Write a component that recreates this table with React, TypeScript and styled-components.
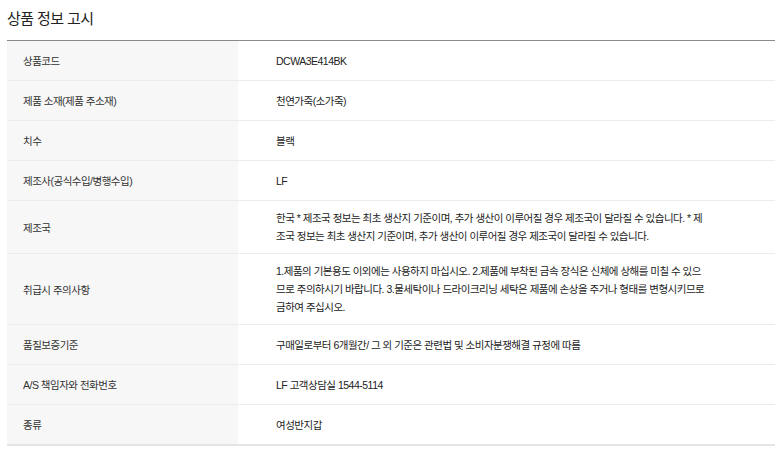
import React from "react";
import styled, { createGlobalStyle } from "styled-components";

const Global = createGlobalStyle`
  html, body { margin: 0; padding: 0; background: #fff; }
  body {
    font-family: "Liberation Sans", "Noto Sans CJK KR", sans-serif;
    color: #222;
  }
`;

const Page = styled.div`
  padding: 0 5px 0 7px;
`;

const Title = styled.h2`
  margin: 0;
  height: 40px;
  display: flex;
  align-items: center;
  padding-bottom: 5px;
  box-sizing: border-box;
  font-size: 15px;
  font-weight: 400;
  letter-spacing: -0.6px;
  color: #222;
`;

const Table = styled.div`
  border-top: 1px solid #8a8a8a;
`;

const Row = styled.div`
  display: grid;
  grid-template-columns: 231px 1fr;
  border-bottom: 1px solid #ececec;
  &:last-child { border-bottom: 2px solid #e4e4e4; }
`;

const Label = styled.div`
  background: #f7f7f7;
  display: flex;
  align-items: center;
  padding: 0 0 0 16px;
  font-size: 10.5px;
  letter-spacing: -0.5px;
  color: #333;
`;

const Value = styled.div`
  min-height: 39px;
  box-sizing: border-box;
  display: flex;
  align-items: center;
  padding: 8px 40px 8px 38px;
  font-size: 10.5px;
  line-height: 18px;
  letter-spacing: -0.5px;
  color: #222;
`;

const Lines = styled.span`
  display: block;
`;

const rows: [string, string[]][] = [
  ["상품코드", ["DCWA3E414BK"]],
  ["제품 소재(제품 주소재)", ["천연가죽(소가죽)"]],
  ["치수", ["블랙"]],
  ["제조사(공식수입/병행수입)", ["LF"]],
  [
    "제조국",
    [
      "한국 * 제조국 정보는 최초 생산지 기준이며, 추가 생산이 이루어질 경우 제조국이 달라질 수 있습니다. * 제",
      "조국 정보는 최초 생산지 기준이며, 추가 생산이 이루어질 경우 제조국이 달라질 수 있습니다.",
    ],
  ],
  [
    "취급시 주의사항",
    [
      "1.제품의 기본용도 이외에는 사용하지 마십시오. 2.제품에 부착된 금속 장식은 신체에 상해를 미칠 수 있으",
      "므로 주의하시기 바랍니다. 3.물세탁이나 드라이크리닝 세탁은 제품에 손상을 주거나 형태를 변형시키므로",
      "금하여 주십시오.",
    ],
  ],
  ["품질보증기준", ["구매일로부터 6개월간/ 그 외 기준은 관련법 및 소비자분쟁해결 규정에 따름"]],
  ["A/S 책임자와 전화번호", ["LF 고객상담실 1544-5114"]],
  ["종류", ["여성반지갑"]],
];

export default function App() {
  return (
    <Page>
      <Global />
      <Title>상품 정보 고시</Title>
      <Table>
        {rows.map(([k, v]) => (
          <Row key={k}>
            <Label>{k}</Label>
            <Value>
              <Lines>
                {v.map((line, i) => (
                  <React.Fragment key={i}>
                    {i > 0 && <br />}
                    {line}
                  </React.Fragment>
                ))}
              </Lines>
            </Value>
          </Row>
        ))}
      </Table>
    </Page>
  );
}
